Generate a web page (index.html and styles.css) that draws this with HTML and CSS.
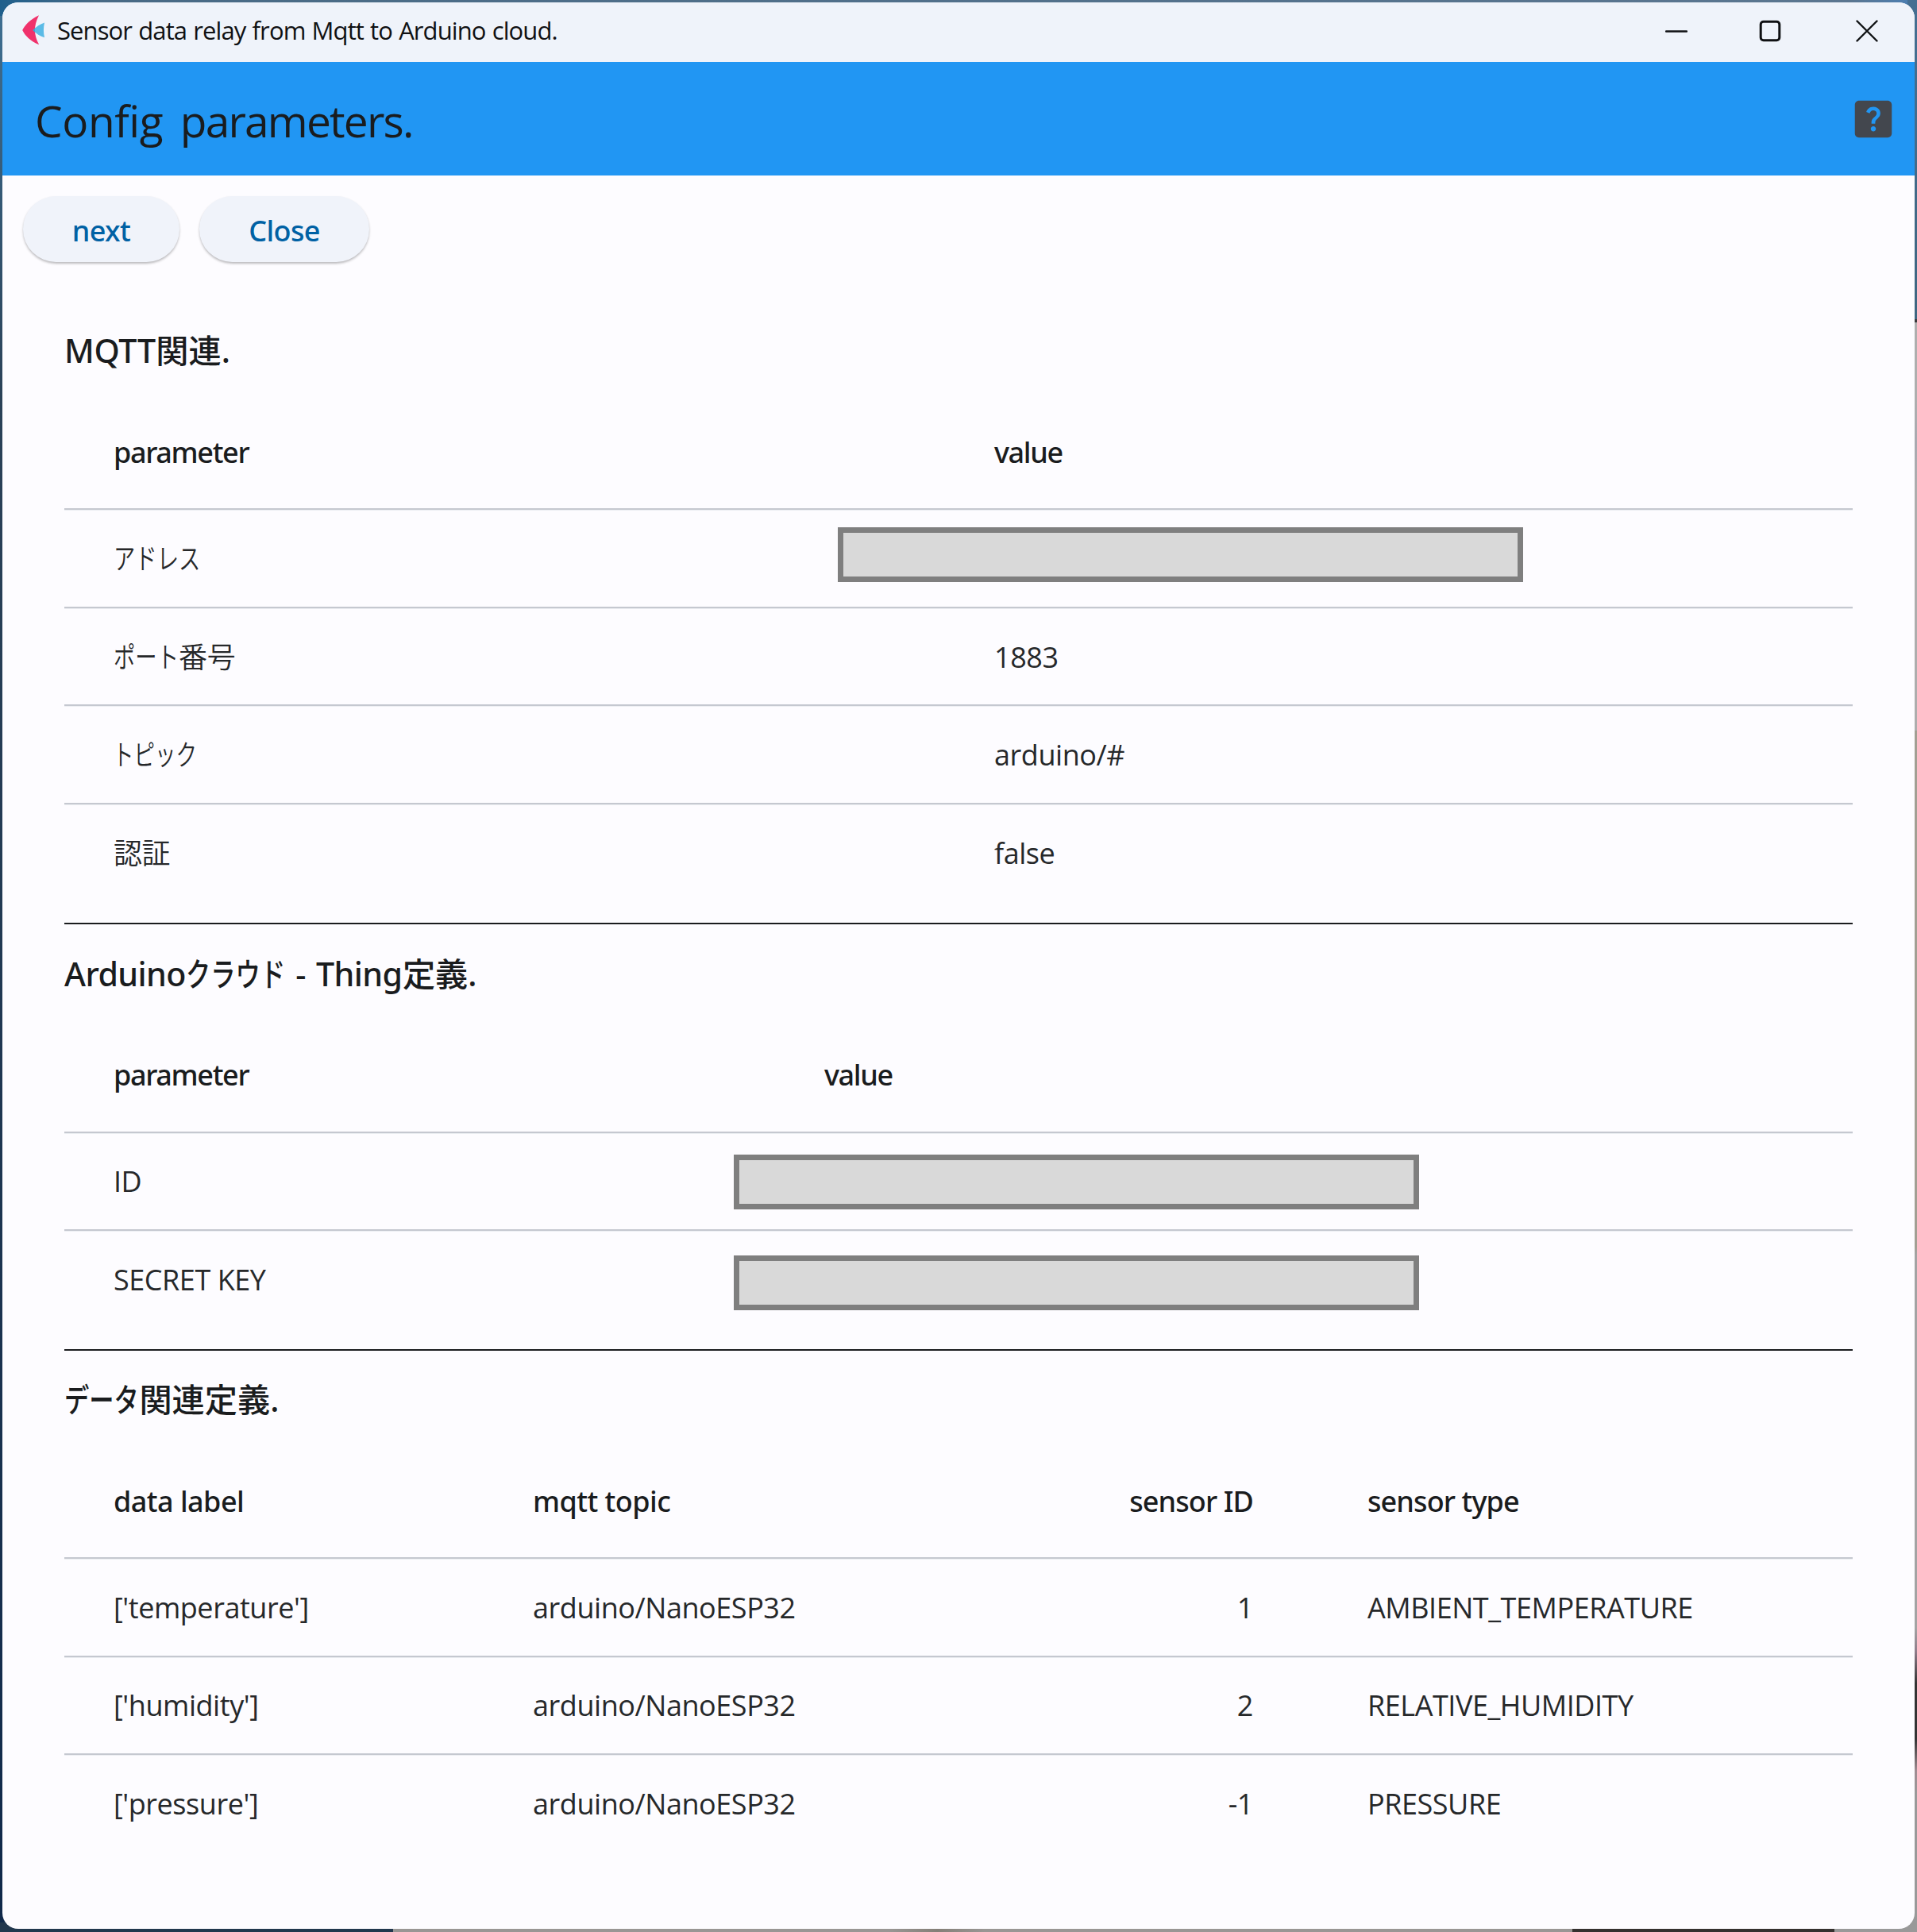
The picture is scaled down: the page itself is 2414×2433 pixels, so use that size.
FILE: index.html
```html
<!DOCTYPE html>
<html lang="ja">
<head>
<meta charset="utf-8">
<title>Sensor data relay from Mqtt to Arduino cloud.</title>
<link rel="stylesheet" href="styles.css">
</head>
<body>
<div class="window">
  <header class="titlebar">
    <svg class="logo" viewBox="0 0 30 40" aria-hidden="true">
      <path class="logo-fin" d="M22 1.2C11 6.500 4.500 13 1.200 20c3.300 7 9.800 13.500 21 18.300C18.500 31.500 17 26 17 20S18.500 8 22 1.200Z"/>
      <path class="logo-tail" d="M29 10.500C23.500 12.500 18.500 15.500 14.500 20c4 4.500 9 7.500 14.500 9.300C27.600 23 27.600 17 29 10.500Z"/>
      <path class="logo-mix" d="M17.300 17.200 14.500 20l2.800 2.900C16.900 21 16.900 19 17.300 17.200Z"/>
    </svg>
    <span class="window-title">Sensor data relay from Mqtt to Arduino cloud.</span>
    <div class="controls">
      <svg viewBox="0 0 28 28"><path d="M1 14.500h26"/></svg>
      <svg viewBox="0 0 28 28"><rect x="2.200" y="2.200" width="23.600" height="23.600" rx="3.500"/></svg>
      <svg viewBox="0 0 28 28"><path d="M1.500 1.500l25 25M26.500 1.500l-25 25"/></svg>
    </div>
  </header>

  <div class="appbar">
    <h1><span class="lead">Config</span> parameters.</h1>
    <svg class="help" viewBox="0 0 24 24" role="img" aria-label="Help"><path d="M19 3H5c-1.100 0-2 .9-2 2v14c0 1.100.9 2 2 2h14c1.100 0 2-.9 2-2V5c0-1.100-.9-2-2-2zm-6.990 15c-.7 0-1.260-.56-1.260-1.260 0-.71.56-1.250 1.260-1.250.71 0 1.250.54 1.250 1.250-.01.69-.54 1.260-1.250 1.260zm3.010-7.400c-.76 1.110-1.480 1.460-1.870 2.170-.16.29-.22.48-.22 1.410h-1.820c0-.49-.08-1.290.31-1.980.49-.87 1.420-1.390 1.960-2.160.57-.81.25-2.330-1.370-2.330-1.060 0-1.580.8-1.800 1.480l-1.650-.7C9.010 7.150 10.220 6 11.990 6c1.480 0 2.490.67 3.010 1.520.44.72.7 2.070.02 3.080z"/></svg>
  </div>

  <div class="actions">
    <button class="btn btn-next">next</button>
    <button class="btn btn-close">Close</button>
  </div>

  <main>
    <section class="mqtt">
      <h2>MQTT<span class="cjk">関連</span>.</h2>
      <div class="row head"><span>parameter</span><span>value</span></div>
      <div class="row"><span class="ja"><i class="kana k4">アドレス</i></span><span class="masked"><b class="mask"></b></span></div>
      <div class="row"><span class="ja"><i class="kana k3">ポート</i>番号</span><span>1883</span></div>
      <div class="row"><span class="ja"><i class="kana k4 tight">トピック</i></span><span>arduino/#</span></div>
      <div class="row"><span class="ja">認証</span><span>false</span></div>
    </section>

    <section class="thing">
      <h2>Arduino<i class="kana k4">クラウド</i> - Thing<span class="cjk">定義</span>.</h2>
      <div class="row head"><span>parameter</span><span>value</span></div>
      <div class="row"><span>ID</span><span class="masked"><b class="mask"></b></span></div>
      <div class="row"><span>SECRET KEY</span><span class="masked"><b class="mask low"></b></span></div>
    </section>

    <section class="data">
      <h2><i class="kana k3">データ</i><span class="cjk">関連定義</span>.</h2>
      <div class="row head"><span>data label</span><span>mqtt topic</span><span class="num">sensor ID</span><span>sensor type</span></div>
      <div class="row"><span>['temperature']</span><span>arduino/NanoESP32</span><span class="num">1</span><span>AMBIENT_TEMPERATURE</span></div>
      <div class="row"><span>['humidity']</span><span>arduino/NanoESP32</span><span class="num">2</span><span>RELATIVE_HUMIDITY</span></div>
      <div class="row"><span>['pressure']</span><span>arduino/NanoESP32</span><span class="num">-1</span><span>PRESSURE</span></div>
    </section>
  </main>
</div>
</body>
</html>
```
FILE: styles.css
```css
* { box-sizing: border-box; }

html, body { height: 100%; }

/* Slivers of the desktop behind the window */
body {
  margin: 0;
  padding: 3px 3px 4px;
  overflow: hidden;
  font-family: "Open Sans", "Noto Sans CJK JP", sans-serif;
  color: #1a1c1e;
  background:
    linear-gradient(90deg, #22384e 0 495px, #999694 495px 1120px, #857f78 1180px, #999694 1240px 1980px, #35312f 1980px 2310px, #999 2310px) 0 100% / 100% 12px no-repeat,
    linear-gradient(#456f92 0, #3f6681 402px, #3a3a3c 402px 406px, #aeaeae 406px 500px, #a9a9b0 560px, #adadad 620px 920px, #a29f93 920px 1570px, #a3a3a3 1580px 2050px, #8f7c8a 2080px, #333 2120px 2190px, #a08c92 2230px, #999 2260px) 100% 0 / 12px 100% no-repeat,
    linear-gradient(90deg, #1f5f8c, #486a85 120px, #5b7690 2330px, #4a7fb5) 0 0 / 100% 20px no-repeat,
    linear-gradient(#3f7093, #2b4258 500px, #10294a);
}

.window {
  height: 2426px;
  border-radius: 20px;
  overflow: hidden;
  background: #fdfcff;
}

.titlebar {
  display: flex;
  align-items: center;
  height: 75px;
  padding: 0 46px 5px 24px;
  background: #eff3fa;
}
.logo { width: 30px; height: 40px; }
.logo-fin { fill: #f0316b; }
.logo-tail { fill: #5bbbe6; }
.logo-mix { fill: #3f9fd0; }
.window-title {
  margin-left: 15px;
  font-size: 31px;
  line-height: 40px;
  letter-spacing: -0.9px;
  word-spacing: 1px;
  color: #101113;
}
.controls { display: flex; gap: 94px; margin: 1px 0 0 auto; }
.controls svg {
  width: 28px;
  height: 28px;
  fill: none;
  stroke: #101113;
  stroke-width: 2.400;
  stroke-linecap: round;
}
.controls svg:first-child { margin-right: -3.500px; }
.controls svg:nth-child(2) { stroke-width: 3; }

.appbar {
  display: flex;
  align-items: center;
  justify-content: space-between;
  height: 143px;
  padding: 0 21px 0 41px;
  background: #2196f3;
}
h1 {
  margin: 4px 0 0;
  font-size: 55px;
  font-weight: 400;
  line-height: 72px;
  letter-spacing: -1.8px;
  word-spacing: 9px;
}
.lead { letter-spacing: -0.4px; }
.help { width: 62px; height: 62px; fill: #43474e; }

.actions {
  display: flex;
  gap: 25px;
  height: 158.600px;
  padding: 26px 26px 0;
}
.btn {
  height: 83px;
  padding: 5px 0 0;
  border: 0;
  border-radius: 42px;
  background: #f0f3fa;
  box-shadow: 0 2px 3px rgba(0, 0, 0, .26);
  color: #0061a4;
  font: 500 36px/48px "Noto Sans", sans-serif;
  letter-spacing: -0.6px;
}
.btn-next { width: 197px; }
.btn-close { width: 214px; }

main { padding: 0 78px; }

section + section { margin-top: 24.800px; border-top: 2px solid #1a1c1e; }

h2 {
  height: 118.400px;
  margin: 0;
  padding: 32px 0 26px;
  font-family: "Noto Sans", "Noto Sans CJK JP", sans-serif;
  font-size: 41.200px;
  font-weight: 500;
  line-height: 60px;
  letter-spacing: -.6px;
  white-space: pre;
}
.mqtt h2 { height: 118px; padding-top: 31px; letter-spacing: -.3px; }
.data h2 { height: 117.600px; padding-top: 31px; }
.thing h2 { word-spacing: 3px; }
.cjk { margin-left: .5px; letter-spacing: 0; }

/* Katakana is set narrow, next to full-width kanji */
.kana {
  display: inline-block;
  font-style: normal;
  letter-spacing: 0;
  transform: scaleX(.76);
  transform-origin: 0 50%;
}
.k3 { margin-right: -.72em; }
.k4 { margin-right: -.96em; }
.tight { margin-left: -1px; transform: scaleX(.736); }
.ja { font-weight: 350; }

.row {
  display: grid;
  align-items: center;
  height: 123.750px;
  padding-top: 2px;
  border-bottom: 2px solid #c5c8d0;
  box-shadow: 0 1px #eceef2;
  color: #26282a;
  font-size: 36px;
  line-height: 48px;
  letter-spacing: -0.45px;
}
.row:last-child { border-bottom-color: transparent; box-shadow: none; }
.row.head {
  height: 144.400px;
  color: #1a1c1e;
  font-family: "Noto Sans", sans-serif;
  font-weight: 500;
}
.row > span { padding-left: 62px; white-space: pre; }
.row > .num { padding: 0 82px 0 0; text-align: right; }

.mqtt .row { grid-template-columns: 1109px 1fr; }
.thing .row { grid-template-columns: 895px 1fr; }
.data .row { grid-template-columns: 528px 690px 361px 1fr; }
.row.head { letter-spacing: -1.35px; }
.data .head { letter-spacing: -.9px; }
.data .head span:nth-child(-n+2) { letter-spacing: -.55px; }

/* Opaque plates laid over private values */
.masked { position: relative; height: 48px; }
.mask {
  position: absolute;
  left: -135px;
  top: -16px;
  width: 863px;
  height: 69px;
  border: 7px solid #7f7f7f;
  background: #d9d9d9;
}
.thing .mask { left: -52px; top: -10px; }
.thing .mask.low { top: -7px; }
```
